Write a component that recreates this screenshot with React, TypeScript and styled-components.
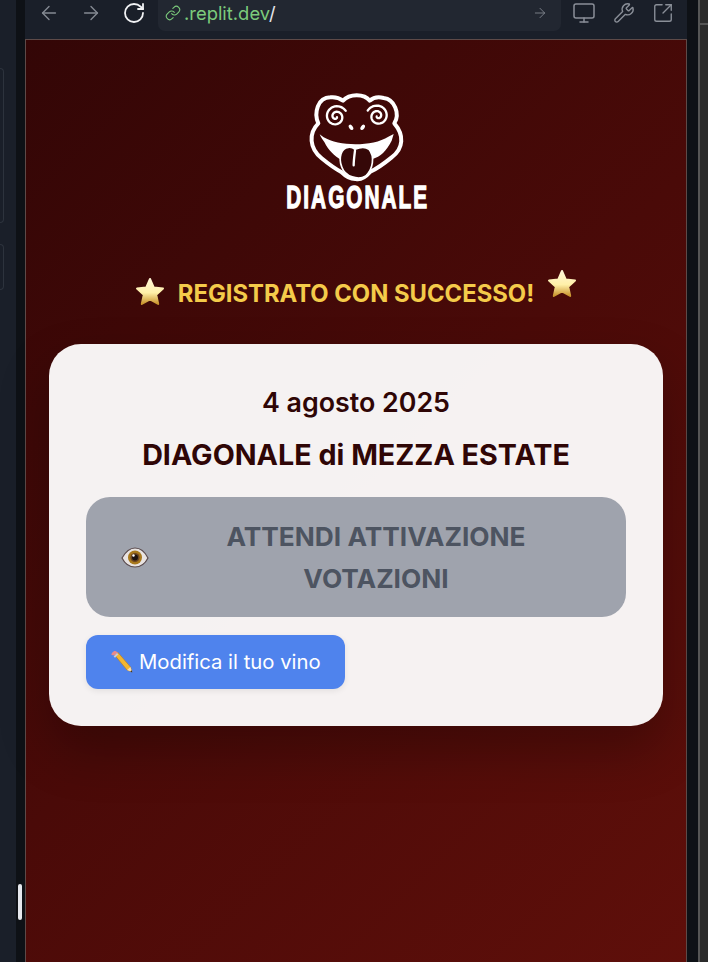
import styled, { createGlobalStyle } from 'styled-components';
import { ArrowLeft, ArrowRight, RotateCw, Link, Monitor, Wrench, SquareArrowOutUpRight } from 'lucide-react';

const GlobalStyle = createGlobalStyle`
  html, body {
    margin: 0;
    padding: 0;
    height: 962px;
    overflow: hidden;
    background: #0e1116;
    font-family: 'Inter', 'Liberation Sans', sans-serif;
  }
  * { box-sizing: border-box; }
`;

const Shell = styled.div`
  position: relative;
  display: flex;
  width: 708px;
  height: 962px;
  overflow: hidden;
`;

const LeftRail = styled.div`
  display: flex;
  flex-direction: column;
  width: 16px;
  padding-top: 68px;
  gap: 21px;
  background: #1a1f29;
`;

const RailPanel = styled.div<{ $height: number }>`
  width: 4px;
  height: ${(p) => p.$height}px;
  border: 1px solid #2d333d;
  border-left: 0;
  border-radius: 0 6px 6px 0;
`;

const Gutter = styled.div<{ $width: number }>`
  width: ${(p) => p.$width}px;
  flex-shrink: 0;
  background: #0e1116;
`;

const ScrollThumb = styled.div`
  position: absolute;
  left: 18px;
  top: 884px;
  width: 4px;
  height: 36px;
  border-radius: 2px;
  background: #e6e8ee;
`;

const Main = styled.div`
  display: flex;
  flex-direction: column;
  width: 662px;
  flex-shrink: 0;
`;

const Toolbar = styled.div`
  display: flex;
  align-items: flex-start;
  height: 39px;
  padding: 0 12px 0 13px;
  background: #1a1f29;
`;

const NavIcons = styled.div`
  display: flex;
  align-items: center;
  height: 26px;
  gap: 20px;
  color: #858a93;
  svg:last-child { color: #f1f2f4; }
`;

const UrlBar = styled.div`
  display: flex;
  align-items: center;
  width: 403px;
  height: 31px;
  margin-left: 12px;
  padding: 0 13px 5px 7px;
  border-radius: 0 0 7px 7px;
  background: #222731;
  font-size: 18.4px;
  color: #e6e8ee;
  svg:first-child { color: #7ccb7c; }
`;

const UrlText = styled.span`
  margin-left: 3px;
  flex: 1;
  b { font-weight: 400; color: #7ccb7c; }
`;

const ToolIcons = styled.div`
  display: flex;
  align-items: center;
  height: 26px;
  margin-left: 11px;
  gap: 17px;
  color: #8a8f98;
`;

const Preview = styled.div`
  flex: 1;
  display: flex;
  flex-direction: column;
  align-items: center;
  padding: 40px 23px 0;
  border: 1px solid #5d4a48;
  border-bottom: 0;
  background: linear-gradient(135deg, #330606 0%, #4a0a08 50%, #5f0f0a 100%);
`;

const Logo = styled.svg`
  display: block;
  width: 170px;
  height: 140px;
  flex-shrink: 0;
`;

const Banner = styled.div`
  display: flex;
  align-items: center;
  justify-content: center;
  gap: 12px;
  height: 34px;
  margin-top: 55px;
`;

const BannerText = styled.h2`
  margin: 4px 0 0;
  font-size: 23.8px;
  line-height: 30px;
  font-weight: 700;
  color: #f4cb4a;
  white-space: nowrap;
`;

const StarIcon = styled.svg<{ $lift: number }>`
  display: block;
  width: 32px;
  height: 32px;
  transform: translateY(${(p) => p.$lift}px);
`;

const Card = styled.div`
  display: flex;
  flex-direction: column;
  align-items: stretch;
  width: 614px;
  height: 382px;
  margin-top: 35px;
  padding: 37px 37px 0;
  border-radius: 32px;
  background: rgba(255, 255, 255, 0.95);
  box-shadow: 0 25px 50px rgba(0, 0, 0, 0.25);
`;

const EventDate = styled.div`
  font-size: 26.8px;
  line-height: 43px;
  font-weight: 600;
  text-align: center;
  color: #2f0606;
`;

const EventTitle = styled.h1`
  margin: 10px 0 21px;
  font-size: 28.7px;
  line-height: 42px;
  font-weight: 700;
  text-align: center;
  color: #2f0606;
`;

const VoteButton = styled.button`
  display: flex;
  align-items: center;
  gap: 10px;
  height: 120px;
  padding: 2px 34px 0;
  border: 0;
  border-radius: 24px;
  background: #9fa3ad;
  color: #4d5461;
  font: 700 26.3px/42px 'Inter', 'Liberation Sans', sans-serif;
`;

const VoteLabel = styled.span`
  flex: 1;
  text-align: center;
`;

const EditButton = styled.button`
  display: flex;
  align-items: center;
  gap: 5px;
  align-self: flex-start;
  height: 54px;
  margin-top: 18px;
  padding: 0 24px;
  border: 0;
  border-radius: 12px;
  background: #4f83ed;
  color: #ffffff;
  font: 400 20.3px/28px 'Inter', 'Liberation Sans', sans-serif;
  box-shadow: 0 2px 6px rgba(0, 0, 0, 0.08);
`;

const RightEdge = styled.div`
  flex: 1;
  border-left: 2px solid #555555;
  background: #2b2b2b;
`;

const EdgeTab = styled.div`
  height: 25px;
  border-bottom: 2px solid #555555;
`;

// spiral from the pupil outwards, dir flips the winding for the other eye
const spiral = (cx: number, cy: number, dir: number, start: number) => {
  const pts: string[] = [];
  const steps = 60;
  for (let i = 0; i <= steps; i++) {
    const t = i / steps;
    const a = start + dir * t * Math.PI * 3.7;
    const r = 3 + t * 31;
    pts.push(`${(cx + Math.cos(a) * r).toFixed(1)},${(cy + Math.sin(a) * r).toFixed(1)}`);
  }
  return pts.join(' ');
};

const LogoMark = () => (
  <Logo viewBox="0 0 510 420">
    <g fill="none" stroke="#fff" strokeLinecap="round" strokeLinejoin="round">
      <path
        strokeWidth="12"
        d="M142 130 C128 100 140 52 178 52 C195 50 208 56 216 62 C235 40 280 40 296 62 C305 54 322 50 338 54 C370 58 388 100 370 130 C400 165 398 205 362 232 C340 250 320 265 298 275 C285 290 270 300 255 297 C240 298 225 290 212 277 C190 265 170 250 152 235 C115 205 112 160 142 130 Z"
      />
      <polyline strokeWidth="7" points={spiral(195, 110, 1, 0.4)} />
      <polyline strokeWidth="7" points={spiral(320, 108, -1, 2.7)} />
    </g>
    <ellipse cx="240" cy="142" rx="5.5" ry="9" fill="#fff" transform="rotate(-35 240 142)" />
    <ellipse cx="275" cy="142" rx="5.5" ry="9" fill="#fff" transform="rotate(35 275 142)" />
    <path
      fill="#fff"
      d="M146 163 L158 172 C205 200 305 200 352 170 L368 162 L362 182 C345 215 330 228 303 238 L212 240 C190 228 172 210 160 186 C155 180 150 172 146 163 Z"
    />
    <path
      fill="#350808"
      stroke="#fff"
      strokeWidth="5"
      d="M232 202 C210 204 202 234 212 260 C222 290 262 302 284 288 C306 268 312 230 294 208 C280 198 266 202 252 208 C246 203 240 201 232 202 Z"
    />
    <path fill="none" stroke="#fff" strokeWidth="7" strokeLinecap="round" d="M252 212 C250 228 248 242 248 256" />
    <text
      transform="translate(260 384) scale(0.67 1)"
      fill="#fff"
      stroke="#fff"
      strokeWidth="4"
      fontFamily="'Liberation Sans', sans-serif"
      fontWeight="700"
      fontSize="93"
      letterSpacing="9"
      textAnchor="middle"
    >
      DIAGONALE
    </text>
  </Logo>
);

const Star = ({ id, lift }: { id: string; lift: number }) => (
  <StarIcon viewBox="0 0 32 32" $lift={lift}>
    <defs>
      <linearGradient id={id} x1="0" y1="0" x2="0" y2="1">
        <stop offset="0" stopColor="#fff6d8" />
        <stop offset="0.55" stopColor="#fff0a8" />
        <stop offset="1" stopColor="#c8922a" />
      </linearGradient>
    </defs>
    <path
      fill={`url(#${id})`}
      stroke={`url(#${id})`}
      strokeWidth="2"
      strokeLinejoin="round"
      d="M16 3 L19.8 11.6 L29 12.6 L22.2 18.8 L24.2 28 L16 23.3 L7.8 28 L9.8 18.8 L3 12.6 L12.2 11.6 Z"
    />
  </StarIcon>
);

const EyeIcon = () => (
  <svg width="30" height="24" viewBox="0 0 30 24">
    <path
      fill="#e9e4e2"
      stroke="#5a4a4c"
      strokeWidth="1.2"
      d="M2 12 C6 5 11 2 15 2 C20 2 25 6 28 12 C25 18 20 21 15 21 C10 21 5 18 2 12 Z"
    />
    <circle cx="15" cy="11.5" r="7" fill="#a8781c" />
    <circle cx="15" cy="11.5" r="4.6" fill="#6b4420" />
    <circle cx="15" cy="11.5" r="3" fill="#1c1210" />
    <circle cx="13.5" cy="9.5" r="1.2" fill="#fff" />
  </svg>
);

const PencilIcon = () => (
  <svg width="24" height="24" viewBox="0 0 24 24">
    <path fill="#f2b632" stroke="#b87a1a" strokeWidth="0.6" d="M5 5.5 L8 2.5 L20.5 17 L22 22 L17 20 Z" />
    <path fill="#e88a8a" d="M1.5 5 C1 3.5 3.5 0.5 5.5 1 L8 2.5 L5 5.5 Z" />
    <path fill="#c8ccd4" d="M3.6 6.6 L7 3 L8.4 4.2 L5 7.8 Z" />
    <path fill="#f6dcb0" d="M17 20 L20.5 17 L22 22 Z" />
    <path fill="#1c1c1c" d="M20.4 21.4 L21.4 20.3 L22.3 22.4 Z" />
  </svg>
);

export default function App() {
  return (
    <>
      <GlobalStyle />
      <Shell>
        <LeftRail>
          <RailPanel $height={155} />
          <RailPanel $height={46} />
        </LeftRail>
        <Gutter $width={9} />
        <Main>
          <Toolbar>
            <NavIcons>
              <ArrowLeft size={22} strokeWidth={1.5} />
              <ArrowRight size={22} strokeWidth={1.5} />
              <RotateCw size={24} strokeWidth={1.8} />
            </NavIcons>
            <UrlBar>
              <Link size={16} strokeWidth={1.6} />
              <UrlText>
                <b>.replit.dev</b>/
              </UrlText>
              <ArrowRight size={16} strokeWidth={1.3} color="#858a93" />
            </UrlBar>
            <ToolIcons>
              <Monitor size={24} strokeWidth={1.5} />
              <Wrench size={22} strokeWidth={1.5} />
              <SquareArrowOutUpRight size={22} strokeWidth={1.5} />
            </ToolIcons>
          </Toolbar>
          <Preview>
            <LogoMark />
            <Banner>
              <Star id="star-a" lift={0} />
              <BannerText>REGISTRATO CON SUCCESSO!</BannerText>
              <Star id="star-b" lift={-8} />
            </Banner>
            <Card>
              <EventDate>4 agosto 2025</EventDate>
              <EventTitle>DIAGONALE di MEZZA ESTATE</EventTitle>
              <VoteButton>
                <EyeIcon />
                <VoteLabel>ATTENDI ATTIVAZIONE VOTAZIONI</VoteLabel>
              </VoteButton>
              <EditButton>
                <PencilIcon />
                Modifica il tuo vino
              </EditButton>
            </Card>
          </Preview>
        </Main>
        <Gutter $width={11} />
        <RightEdge>
          <EdgeTab />
        </RightEdge>
        <ScrollThumb />
      </Shell>
    </>
  );
}
